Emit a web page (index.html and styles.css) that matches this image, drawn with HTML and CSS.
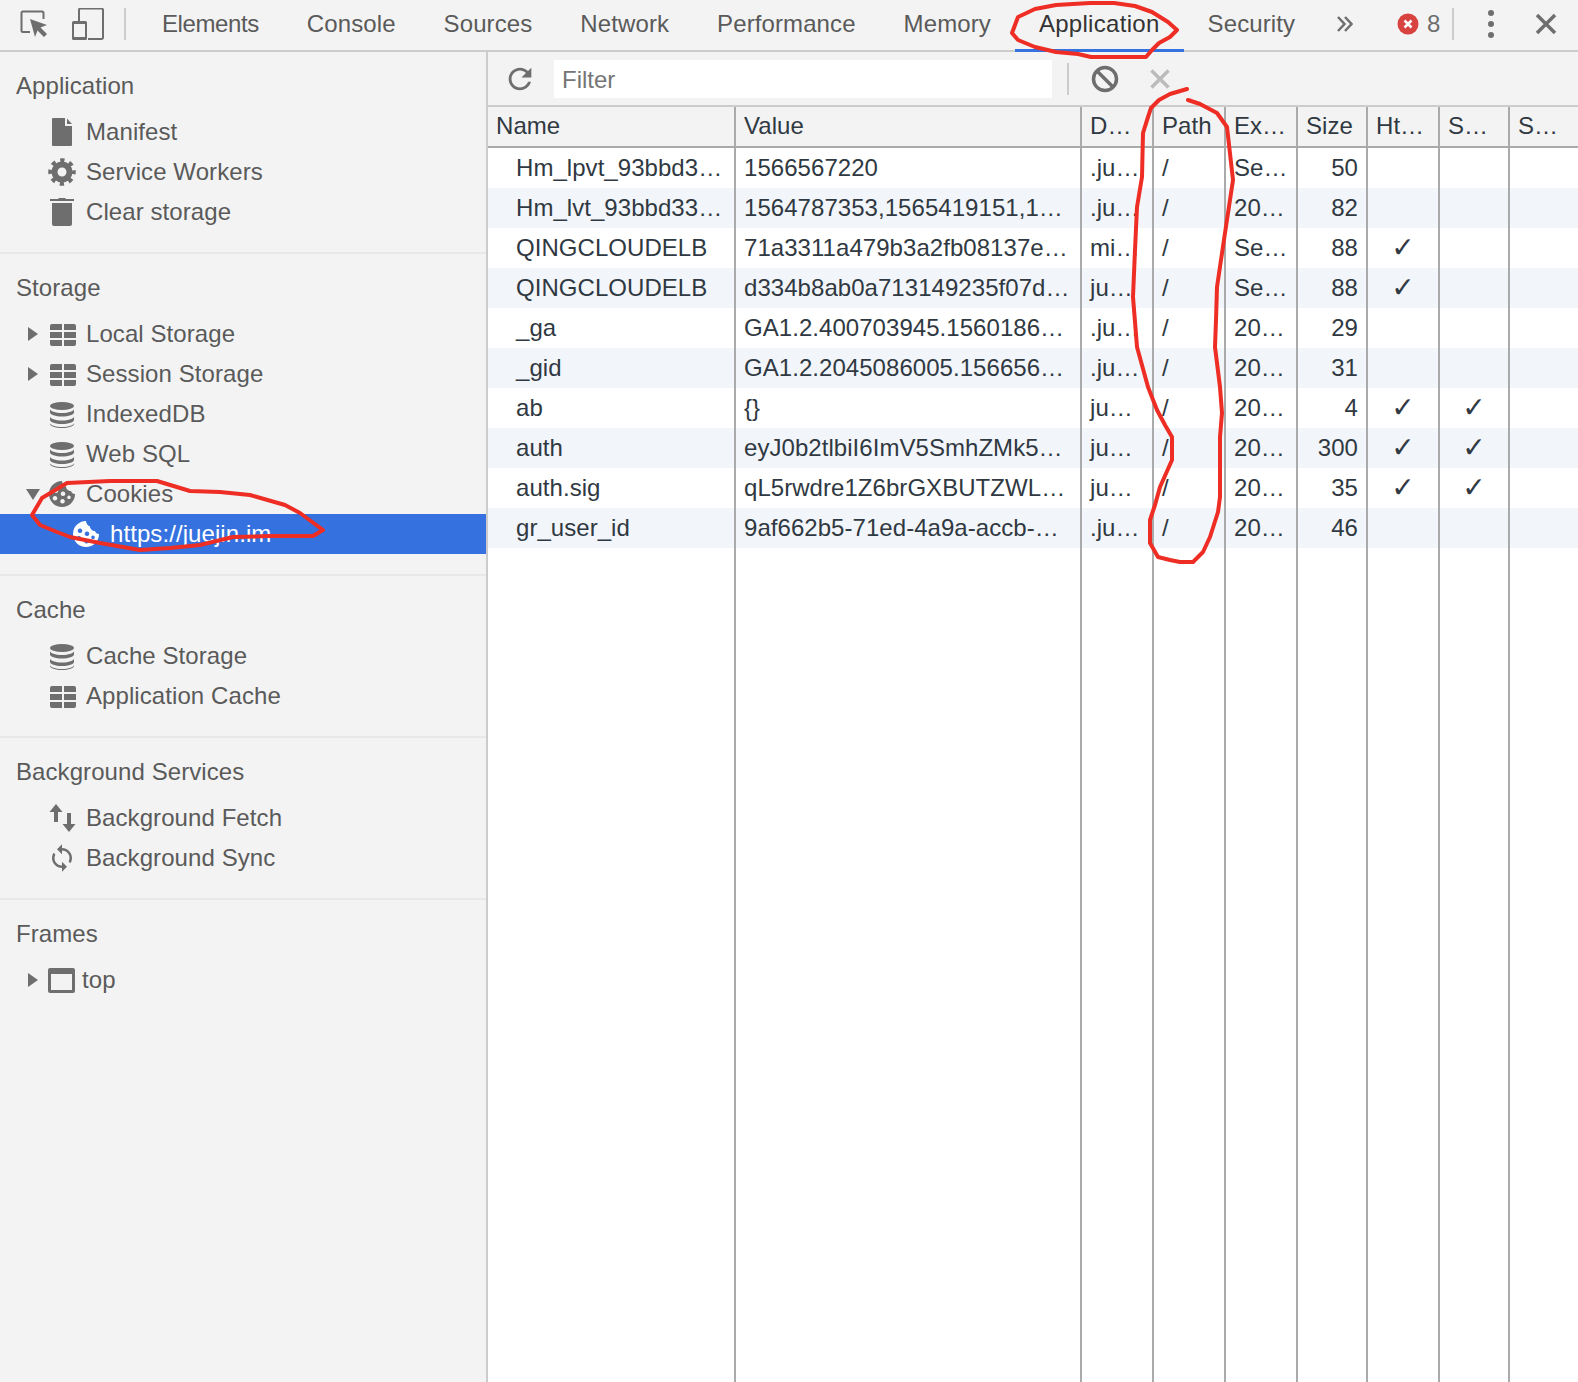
FILE: index.html
```html
<!DOCTYPE html>
<html lang="en">
<head>
    <meta charset="UTF-8">
    <title>DevTools - Application</title>
    <link rel="stylesheet" href="styles.css">
</head>
<body>
    <svg class="defs" width="0" height="0">
        <symbol id="i-file" viewBox="0 0 30 30"><path d="M6 1h12v8h7v19a1 1 0 0 1-1 1H6a1 1 0 0 1-1-1V2a1 1 0 0 1 1-1z"/><path d="M20 1.500l5 5.500h-5z"/></symbol>
        <symbol id="i-gear" viewBox="0 0 30 30"><g fill="none" stroke="currentColor"><circle cx="15" cy="15" r="7.500" stroke-width="6"/><circle cx="15" cy="15" r="11.500" stroke-width="4.500" stroke-dasharray="4.200 4.830" stroke-dashoffset="2.100"/></g></symbol>
        <symbol id="i-trash" viewBox="0 0 30 30"><path d="M3 2h8l1-1h6l1 1h8v2H3z"/><path d="M5 6h20v21a2 2 0 0 1-2 2H7a2 2 0 0 1-2-2z"/></symbol>
        <symbol id="i-grid" viewBox="0 0 30 30"><path d="M3 7a2 2 0 0 1 2-2h10v6H3zM17 5h10a2 2 0 0 1 2 2v4H17zM3 13h12v6H3zM17 13h12v6H17zM3 21h12v6H5a2 2 0 0 1-2-2zM17 21h12v4a2 2 0 0 1-2 2H17z"/></symbol>
        <symbol id="i-db" viewBox="0 0 30 30"><ellipse cx="15" cy="7" rx="12" ry="4"/><path d="M3 10v3.500c0 2.200 5.400 4 12 4s12-1.800 12-4V10c0 2.200-5.400 4-12 4s-12-1.800-12-4z"/><path d="M3 17.500V21c0 2.200 5.400 4 12 4s12-1.800 12-4v-3.500c0 2.200-5.400 4-12 4s-12-1.800-12-4z"/><path d="M3 24v1c0 2.200 5.400 4 12 4s12-1.800 12-4v-1c0 2.200-5.400 4-12 4s-12-1.800-12-4z"/></symbol>
        <symbol id="i-cookie" viewBox="0 0 30 30"><path fill-rule="evenodd" d="M15 2a13 13 0 1 0 13 13c-2 0-3.500-1-4-3-2.500 0-5-2-5-4.500C17 7 15 4.500 15 2zM9 9.500a2.300 2.300 0 1 0 .01 0zM16 12.500a2.300 2.300 0 1 0 .01 0zM8 17a2.300 2.300 0 1 0 .01 0zM15.500 20a2.300 2.300 0 1 0 .01 0zM22 16.500a1.800 1.800 0 1 0 .01 0z"/></symbol>
        <symbol id="i-fetch" viewBox="0 0 30 30"><path d="M9 1l6.500 8H11v10H7V9H2.500zM20 10h4v11h4.500L22 29l-6.500-8H20z"/></symbol>
        <symbol id="i-sync" viewBox="0 0 24 24"><path d="M12 4V1L8 5l4 4V6c3.310 0 6 2.690 6 6 0 1.010-.25 1.970-.7 2.800l1.460 1.460C19.540 15.030 20 13.570 20 12c0-4.420-3.580-8-8-8zm0 14c-3.310 0-6-2.690-6-6 0-1.010.25-1.970.7-2.800L5.240 7.740C4.460 8.970 4 10.430 4 12c0 4.420 3.580 8 8 8v3l4-4-4-4v3z"/></symbol>
        <symbol id="i-frame" viewBox="0 0 30 30"><path fill-rule="evenodd" d="M3 3h23a2 2 0 0 1 2 2v21a2 2 0 0 1-2 2H3a2 2 0 0 1-2-2V5a2 2 0 0 1 2-2zM4 9v16h21V9z"/></symbol>
    </svg>

    <div class="app">
        <header class="toolbar">
            <svg class="tool-inspect" width="30" height="30" viewBox="0 0 30 30"><path d="M11 23H4a1.500 1.500 0 0 1-1.500-1.500V4A1.500 1.500 0 0 1 4 2.500h19A1.500 1.500 0 0 1 24.500 4v6" fill="none" stroke="currentColor" stroke-width="2"/><path d="M11 10l17 6-6.500 2.500L28 25l-3 3-6.500-6.500L16 28z"/></svg>
            <svg class="tool-device" width="32" height="32" viewBox="0 0 32 32"><path d="M7 13V2a1.500 1.500 0 0 1 1.500-1.500h21A1.500 1.500 0 0 1 31 2v27.500a1.500 1.500 0 0 1-1.500 1.500H16" fill="none" stroke="currentColor" stroke-width="2"/><path fill-rule="evenodd" d="M1.500 13h12a1.500 1.500 0 0 1 1.500 1.500v16a1.500 1.500 0 0 1-1.500 1.500h-12A1.500 1.500 0 0 1 0 30.500v-16A1.500 1.500 0 0 1 1.500 13zM2 16v13h11V16z"/></svg>
            <span class="tool-sep"></span>
            <nav class="tabs">
                <a class="tab first">Elements</a>
                <a class="tab">Console</a>
                <a class="tab">Sources</a>
                <a class="tab">Network</a>
                <a class="tab">Performance</a>
                <a class="tab">Memory</a>
                <a class="tab active">Application</a>
                <a class="tab">Security</a>
            </nav>
            <svg class="tool-more" width="18" height="18" viewBox="0 0 18 18"><path d="M2 2l6.500 7L2 16M9 2l6.500 7L9 16" fill="none" stroke="currentColor" stroke-width="2.500"/></svg>
            <svg class="tool-error" width="22" height="22" viewBox="0 0 22 22"><circle cx="11" cy="11" r="10.500" fill="#d9433f"/><path d="M7.500 7.500l7 7M14.500 7.500l-7 7" stroke="#fff" stroke-width="2.500"/></svg>
            <span class="error-count">8</span>
            <span class="tool-sep end"></span>
            <svg class="tool-kebab" width="8" height="30" viewBox="0 0 8 30"><circle cx="4" cy="4" r="3"/><circle cx="4" cy="15" r="3"/><circle cx="4" cy="26" r="3"/></svg>
            <svg class="tool-close" width="22" height="22" viewBox="0 0 22 22"><path d="M2 2l18 18M20 2L2 20" stroke="currentColor" stroke-width="3.500"/></svg>
        </header>

        <div class="main">
            <aside class="sidebar">
                <section class="group">
                    <h2>Application</h2>
                    <div class="item"><span class="arrow"></span><svg class="icon"><use href="#i-file"/></svg>Manifest</div>
                    <div class="item"><span class="arrow"></span><svg class="icon"><use href="#i-gear"/></svg>Service Workers</div>
                    <div class="item"><span class="arrow"></span><svg class="icon"><use href="#i-trash"/></svg>Clear storage</div>
                </section>
                <section class="group">
                    <h2>Storage</h2>
                    <div class="item"><span class="arrow right"></span><svg class="icon"><use href="#i-grid"/></svg>Local Storage</div>
                    <div class="item"><span class="arrow right"></span><svg class="icon"><use href="#i-grid"/></svg>Session Storage</div>
                    <div class="item"><span class="arrow"></span><svg class="icon"><use href="#i-db"/></svg>IndexedDB</div>
                    <div class="item"><span class="arrow"></span><svg class="icon"><use href="#i-db"/></svg>Web SQL</div>
                    <div class="item"><span class="arrow down"></span><svg class="icon"><use href="#i-cookie"/></svg>Cookies</div>
                    <div class="item child selected"><span class="arrow"></span><svg class="icon"><use href="#i-cookie"/></svg>https://juejin.im</div>
                </section>
                <section class="group">
                    <h2>Cache</h2>
                    <div class="item"><span class="arrow"></span><svg class="icon"><use href="#i-db"/></svg>Cache Storage</div>
                    <div class="item"><span class="arrow"></span><svg class="icon"><use href="#i-grid"/></svg>Application Cache</div>
                </section>
                <section class="group">
                    <h2>Background Services</h2>
                    <div class="item"><span class="arrow"></span><svg class="icon"><use href="#i-fetch"/></svg>Background Fetch</div>
                    <div class="item"><span class="arrow"></span><svg class="icon"><use href="#i-sync"/></svg>Background Sync</div>
                </section>
                <section class="group last">
                    <h2>Frames</h2>
                    <div class="item tight"><span class="arrow right"></span><svg class="icon"><use href="#i-frame"/></svg>top</div>
                </section>
            </aside>

            <div class="panel">
                <div class="filter-bar">
                    <svg class="tool-refresh" width="34" height="34" viewBox="0 0 24 24"><path d="M17.650 6.350C16.200 4.900 14.210 4 12 4c-4.420 0-7.990 3.580-7.990 8s3.570 8 7.990 8c3.730 0 6.840-2.550 7.730-6h-2.080c-.82 2.330-3.040 4-5.650 4-3.310 0-6-2.690-6-6s2.690-6 6-6c1.660 0 3.140.69 4.220 1.780L13 11h7V4l-2.350 2.350z"/></svg>
                    <div class="filter-input">Filter</div>
                    <span class="tool-sep filter"></span>
                    <svg class="tool-clear" width="28" height="28" viewBox="0 0 28 28"><g fill="none" stroke="currentColor" stroke-width="3.500"><circle cx="14" cy="14" r="11.500"/><path d="M6 6l16 16"/></g></svg>
                    <svg class="tool-delete" width="20" height="20" viewBox="0 0 20 20"><path d="M1.500 1.500l17 17M18.500 1.500l-17 17" stroke="currentColor" stroke-width="3.500"/></svg>
                </div>

                <table class="cookies">
                    <colgroup>
                        <col class="c-name"><col class="c-value"><col class="c-small"><col class="c-small"><col class="c-small"><col class="c-narrow"><col class="c-small"><col class="c-narrow"><col>
                    </colgroup>
                    <thead>
                        <tr><th>Name</th><th>Value</th><th>D…</th><th>Path</th><th>Ex…</th><th>Size</th><th>Ht…</th><th>S…</th><th>S…</th></tr>
                    </thead>
                    <tbody>
                        <tr><td class="name">Hm_lpvt_93bbd3…</td><td>1566567220</td><td>.ju…</td><td>/</td><td>Se…</td><td class="num">50</td><td></td><td></td><td></td></tr>
                        <tr><td class="name">Hm_lvt_93bbd33…</td><td>1564787353,1565419151,1…</td><td>.ju…</td><td>/</td><td>20…</td><td class="num">82</td><td></td><td></td><td></td></tr>
                        <tr><td class="name">QINGCLOUDELB</td><td>71a3311a479b3a2fb08137e…</td><td>mi…</td><td>/</td><td>Se…</td><td class="num">88</td><td class="check">✓</td><td></td><td></td></tr>
                        <tr><td class="name">QINGCLOUDELB</td><td>d334b8ab0a713149235f07d…</td><td>ju…</td><td>/</td><td>Se…</td><td class="num">88</td><td class="check">✓</td><td></td><td></td></tr>
                        <tr><td class="name">_ga</td><td>GA1.2.400703945.1560186…</td><td>.ju…</td><td>/</td><td>20…</td><td class="num">29</td><td></td><td></td><td></td></tr>
                        <tr><td class="name">_gid</td><td>GA1.2.2045086005.156656…</td><td>.ju…</td><td>/</td><td>20…</td><td class="num">31</td><td></td><td></td><td></td></tr>
                        <tr><td class="name">ab</td><td>{}</td><td>ju…</td><td>/</td><td>20…</td><td class="num">4</td><td class="check">✓</td><td class="check">✓</td><td></td></tr>
                        <tr><td class="name">auth</td><td>eyJ0b2tlbiI6ImV5SmhZMk5…</td><td>ju…</td><td>/</td><td>20…</td><td class="num">300</td><td class="check">✓</td><td class="check">✓</td><td></td></tr>
                        <tr><td class="name">auth.sig</td><td>qL5rwdre1Z6brGXBUTZWL…</td><td>ju…</td><td>/</td><td>20…</td><td class="num">35</td><td class="check">✓</td><td class="check">✓</td><td></td></tr>
                        <tr><td class="name">gr_user_id</td><td>9af662b5-71ed-4a9a-accb-…</td><td>.ju…</td><td>/</td><td>20…</td><td class="num">46</td><td></td><td></td><td></td></tr>
                        <tr class="filler"><td></td><td></td><td></td><td></td><td></td><td></td><td></td><td></td><td></td></tr>
                    </tbody>
                </table>
            </div>
        </div>
    </div>

    <!-- red pen marks drawn over the screenshot -->
    <svg class="marks" width="1578" height="1382" viewBox="0 0 1578 1382">
        <path d="M1012 33L1018 17L1035 9L1056 5L1090 3L1114 3L1135 6L1152 12L1168 22L1177 30L1170 37L1159 43L1152 50L1146 57L1118 57L1091 57L1078 54L1056 52L1035 47L1018 40L1012 33z"/>
        <path d="M1187 89L1170 94L1159 100L1151 108L1148 117L1143 133L1142 177L1137 207L1135 250L1133 297L1137 347L1148 387L1157 410L1165 425L1172 437L1172 460L1160 487L1155 505L1150 520L1150 543L1158 557L1170 560L1180 562L1193 562L1203 552L1210 537L1218 512L1220 497L1220 437L1222 413L1220 387L1215 347L1216 320L1217 287L1221 260L1225 233L1233 180L1227 127L1217 113L1200 104L1188 100"/>
        <path d="M42 498L67 483L110 481L157 481L190 491L220 492L250 495L285 505L300 513L323 530L313 536L270 536L233 537L200 545L170 548L140 550L100 543L70 537L57 532L40 525L32 515L42 498z"/>
    </svg>
</body>
</html>
```

FILE: styles.css
```css
* {
    box-sizing: border-box;
}

body {
    margin: 0;
    height: 1382px;
    overflow: hidden;
    background: #fff;
    color: #5a5a5a;
    font-family: "Liberation Sans", Arial, sans-serif;
    font-size: 24px;
}

svg {
    fill: currentColor;
    flex: none;
}

.defs {
    position: absolute;
}

.app {
    display: flex;
    flex-direction: column;
    height: 100%;
}

/* top toolbar */
.toolbar {
    display: flex;
    align-items: center;
    height: 52px;
    padding: 0 0 3px 19px;
    background: #f3f3f3;
    border-bottom: 2px solid #ccc;
    color: #6e6e6e;
}

.tool-device {
    margin-left: 23px;
}

.tool-sep {
    width: 2px;
    height: 32px;
    margin-left: 20px;
    background: #ccc;
}

.tabs {
    display: flex;
    align-self: flex-start;
    margin-left: 12px;
}

.tab {
    display: flex;
    align-items: center;
    height: 52px;
    padding: 0 24px 4px;
    color: #5a5a5a;
    letter-spacing: 0.1px;
}

.tab.first {
    letter-spacing: -0.4px;
}

.tab.active {
    padding-bottom: 1px;
    color: #333;
    letter-spacing: 0.3px;
    border-bottom: 3px solid #3572e0;
}

.tool-more {
    margin-left: 17px;
}

.tool-error {
    margin-left: 43px;
}

.error-count {
    margin-left: 8px;
}

.tool-sep.end {
    margin-left: 12px;
}

.tool-kebab {
    margin-left: 33px;
}

.tool-close {
    margin-left: 40px;
}

.main {
    display: flex;
    flex: 1;
    min-height: 0;
}

/* left tree */
.sidebar {
    width: 488px;
    flex: none;
    background: #f3f3f3;
    border-right: 2px solid #ccc;
    letter-spacing: 0.08px;
}

.group {
    padding: 14px 0 20px;
    border-bottom: 2px solid #e8e8e8;
}

.group.last {
    border-bottom: none;
}

.group h2 {
    margin: 0 0 6px;
    padding-left: 16px;
    font-size: 24px;
    font-weight: normal;
    line-height: 40px;
}

.item {
    display: flex;
    align-items: center;
    height: 40px;
    padding-left: 28px;
    white-space: nowrap;
}

.item.child {
    padding-left: 52px;
}

.item.selected {
    background: #3572e0;
    color: #fff;
}

.arrow {
    width: 10px;
    height: 16px;
    flex: none;
}

.arrow.right {
    border-left: 10px solid #6e6e6e;
    border-top: 7px solid transparent;
    border-bottom: 7px solid transparent;
    height: 14px;
}

.arrow.down {
    width: 14px;
    height: 10px;
    margin-left: -2px;
    margin-right: -2px;
    border-top: 11px solid #6e6e6e;
    border-left: 7px solid transparent;
    border-right: 7px solid transparent;
}

.icon {
    width: 30px;
    height: 30px;
    margin: 0 9px 0 9px;
    color: #6e6e6e;
}

.selected .icon {
    color: #fff;
}

.item.tight .icon {
    margin-right: 5px;
}

/* right panel */
.panel {
    display: flex;
    flex-direction: column;
    flex: 1;
    min-width: 0;
}

.filter-bar {
    display: flex;
    align-items: center;
    height: 55px;
    flex: none;
    padding-left: 15px;
    background: #f3f3f3;
    border-bottom: 2px solid #ccc;
    color: #6e6e6e;
}

.filter-input {
    width: 498px;
    height: 38px;
    margin-left: 17px;
    padding-left: 8px;
    background: #fff;
    color: #757575;
    line-height: 40px;
}

.tool-sep.filter {
    margin-left: 15px;
}

.tool-clear {
    margin-left: 22px;
}

.tool-delete {
    margin-left: 31px;
    color: #bbb;
}

.cookies {
    width: 100%;
    flex: 1;
    table-layout: fixed;
    border-collapse: separate;
    border-spacing: 0;
    color: #303942;
    letter-spacing: 0.05px;
}

.c-name {
    width: 248px;
}

.c-value {
    width: 346px;
}

.c-small {
    width: 72px;
}

.c-narrow {
    width: 70px;
}

.cookies th,
.cookies td {
    padding: 0 8px;
    overflow: hidden;
    white-space: nowrap;
    border-right: 2px solid #aaa;
    font-weight: normal;
    text-align: left;
}

.cookies th {
    height: 41px;
    padding-bottom: 2px;
    background: #f3f3f3;
    border-bottom: 2px solid #aaa;
}

.cookies td {
    height: 40px;
}

.cookies th:last-child,
.cookies td:last-child {
    border-right: none;
}

.cookies tbody tr:nth-child(even) {
    background: #f2f5fa;
}

.cookies .name {
    padding-left: 28px;
}

.cookies .num {
    text-align: right;
}

.cookies .check {
    padding: 0;
    text-align: center;
    font-family: "DejaVu Sans", sans-serif;
    font-size: 28px;
    font-weight: bold;
    line-height: 30px;
}

.cookies .filler {
    background: #fff !important;
}

.cookies .filler td {
    height: 834px;
}

/* pen marks */
.marks {
    position: absolute;
    top: 0;
    left: 0;
    fill: none;
    stroke: #ee2d24;
    stroke-width: 4;
    stroke-linejoin: round;
    stroke-linecap: round;
    pointer-events: none;
}
```
